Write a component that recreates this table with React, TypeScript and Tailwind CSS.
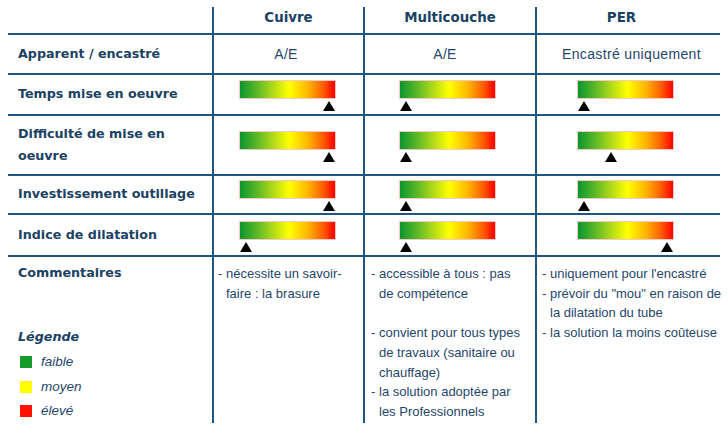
import React from "react";

type Level = "low" | "mid" | "high";

const markerPos: Record<Level, string> = {
  low: "ml-px",
  mid: "ml-[28px]",
  high: "ml-[84px]",
};

const rows: { label: React.ReactNode; kind: "text" | "bar"; values: (string | Level)[] }[] = [
  { label: "Apparent / encastré", kind: "text", values: ["A/E", "A/E", "Encastré uniquement"] },
  { label: "Temps mise en oeuvre", kind: "bar", values: ["high", "low", "low"] },
  { label: <>Difficulté de mise en<br />oeuvre</>, kind: "bar", values: ["high", "low", "mid"] },
  { label: "Investissement outillage", kind: "bar", values: ["high", "low", "low"] },
  { label: "Indice de dilatation", kind: "bar", values: ["low", "low", "high"] },
];

// per-column alignment tweaks so things sit where the original puts them
const barPad = ["pl-[25px]", "pl-[34px]", "pl-[40px]"];
const textPad = ["pr-[5px]", "pr-[10px]", "pl-[6px]"];
const headPad = ["pr-0", "pr-0", "pr-[14px]"];

const line = "border-[#1f5583]";

function Gauge({ level }: { level: Level }) {
  return (
    <div className="w-[97px] flex flex-col">
      <div className="h-[19px] w-[97px] border border-[#f3c9c0] bg-[linear-gradient(to_right,#0b962f_0%,#5cb827_18%,#b6dc18_36%,#ffff00_52%,#ffb300_72%,#ff5a00_88%,#ff0000_100%)]" />
      <svg className={`mt-[2px] ${markerPos[level]}`} width="12" height="10" viewBox="0 0 12 10">
        <polygon points="6,0 12,10 0,10" fill="#000" />
      </svg>
    </div>
  );
}

function Comment({ lines, className = "" }: { lines: string[]; className?: string }) {
  return (
    <div className={`flex ${className}`}>
      <span className="w-[8px] shrink-0">-</span>
      <div>
        {lines.map((l, i) => (
          <div key={i} className="whitespace-nowrap">{l}</div>
        ))}
      </div>
    </div>
  );
}

export default function App() {
  const bold = "font-['DejaVu_Sans',Verdana,sans-serif] font-bold text-[12.7px] text-[#1b4264]";
  const body = "font-['Liberation_Sans',Arial,sans-serif] text-[#1f466b]";

  return (
    <div className="w-[728px] h-[435px] bg-white pl-[8px] pt-[7px]">
      <div className="grid grid-cols-[204px_151px_172px_185px] grid-rows-[28px_40px_41px_60px_39px_42px_166px]">
        {/* header */}
        <div className={`border-b-2 ${line}`} />
        {["Cuivre", "Multicouche", "PER"].map((h, i) => (
          <div key={h} className={`border-b-2 border-l-2 ${line} flex items-center justify-center pb-[3px] ${headPad[i]} ${bold} text-[13.4px]`}>
            {h}
          </div>
        ))}

        {rows.map((r, ri) => (
          <React.Fragment key={ri}>
            <div className={`border-b-2 ${line} flex items-center pl-[10px] pb-[1px] leading-[22px] ${bold}`}>{r.label}</div>
            {r.values.map((v, ci) => (
              <div
                key={ci}
                className={`border-b-2 border-l-2 ${line} flex items-center ${
                  r.kind === "bar" ? `${barPad[ci]} pt-[2px]` : `justify-center ${textPad[ci]}`
                }`}
              >
                {r.kind === "bar" ? (
                  <Gauge level={v as Level} />
                ) : (
                  <span className={`${body} text-[14px] tracking-[0.35px]`}>{v}</span>
                )}
              </div>
            ))}
          </React.Fragment>
        ))}

        {/* comments row */}
        <div className="pl-[10px] pt-[6px]">
          <div className={`${bold} leading-[20px]`}>Commentaires</div>
          <div className={`${bold} italic leading-[20px] mt-[44px]`}>Légende</div>
          <div className="mt-[3px] flex flex-col">
            {[
              ["bg-[#169a2b]", "faible"],
              ["bg-[#ffff00]", "moyen"],
              ["bg-[#ff1200]", "élevé"],
            ].map(([c, t]) => (
              <div key={t} className="h-[24.5px] flex items-center">
                <span className={`w-[12px] h-[12px] ml-[2px] ${c}`} />
                <span className={`${body} italic text-[13.5px] ml-[9px]`}>{t}</span>
              </div>
            ))}
          </div>
        </div>
        <div className={`border-l-2 ${line} pl-[4px] pt-[7px] ${body} text-[13px] leading-[19.7px]`}>
          <Comment lines={["nécessite un savoir-", "faire : la brasure"]} />
        </div>
        <div className={`border-l-2 ${line} pl-[6px] pt-[7px] ${body} text-[13px] leading-[19.7px]`}>
          <Comment lines={["accessible à tous : pas", "de compétence"]} />
          <Comment className="mt-[19.7px]" lines={["convient pour tous types", "de travaux (sanitaire ou", "chauffage)"]} />
          <Comment lines={["la solution adoptée par", "les Professionnels"]} />
        </div>
        <div className={`border-l-2 ${line} pl-[5px] pt-[7px] ${body} text-[13px] leading-[19.7px]`}>
          <Comment lines={["uniquement pour l'encastré"]} />
          <Comment lines={["prévoir du \"mou\" en raison de", "la dilatation du tube"]} />
          <Comment lines={["la solution la moins coûteuse"]} />
        </div>
      </div>
    </div>
  );
}
